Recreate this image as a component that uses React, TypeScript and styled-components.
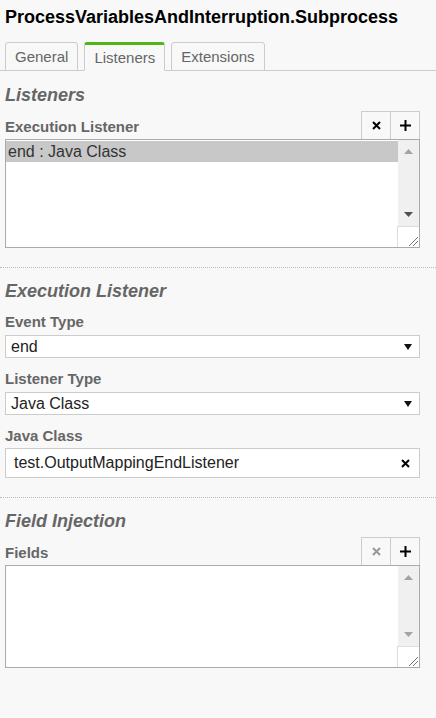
import React from 'react';
import styled, { createGlobalStyle } from 'styled-components';

const GlobalStyle = createGlobalStyle`
	html, body {
		margin: 0;
		padding: 0;
		background: #f8f8f8;
		font-family: 'Liberation Sans', Arial, sans-serif;
	}
	* {
		box-sizing: border-box;
	}
`;

const Panel = styled.div`
	min-height: 100vh;
	background: #f8f8f8;
`;

const Header = styled.div`
	padding: 7px 5px 0 5px;
`;

const Title = styled.div`
	font-size: 18px;
	line-height: 20px;
	font-weight: bold;
	color: #000;
	white-space: nowrap;
`;

const TabBar = styled.div`
	display: flex;
	gap: 6px;
	margin-top: 15px;
	margin-bottom: 1px;
	padding-left: 5px;
	border-bottom: 1px solid #ccc;
`;

const TabLink = styled.div<{ $active?: boolean }>`
	display: flex;
	align-items: center;
	height: 29px;
	margin-bottom: -1px;
	padding: 0 9px;
	font-size: 15px;
	color: #666;
	background: #f8f8f8;
	border: 1px solid #ccc;
	border-top: ${(p) => (p.$active ? '3px solid #52b415' : '1px solid #ccc')};
	border-bottom-color: ${(p) => (p.$active ? '#f8f8f8' : '#ccc')};
	border-radius: 3px 3px 0 0;
`;

const Group = styled.div<{ $last?: boolean }>`
	padding: 13px 16px ${(p) => (p.$last ? '0' : '19px')} 5px;
	border-bottom: ${(p) => (p.$last ? 'none' : '1px dotted #bbb')};
`;

const GroupHeading = styled.div`
	font-size: 18px;
	line-height: 20px;
	font-weight: bold;
	font-style: italic;
	color: #666;
	margin-bottom: 2px;
`;

const Label = styled.div`
	font-size: 15px;
	line-height: 18px;
	font-weight: bold;
	color: #666;
`;

const ListHeader = styled.div`
	display: flex;
	justify-content: space-between;
	align-items: flex-start;
	height: 28px;
	margin-top: 6px;

	${Label} {
		margin-top: 7px;
	}
`;

const ActionButtons = styled.div`
	display: flex;
`;

const ActionButton = styled.div<{ $disabled?: boolean }>`
	display: flex;
	align-items: center;
	justify-content: center;
	width: 30px;
	height: 28px;
	border: 1px solid #ccc;
	border-bottom: none;
	color: ${(p) => (p.$disabled ? '#999' : '#000')};

	& + & {
		margin-left: -1px;
	}
`;

const ListBox = styled.div<{ $height: number }>`
	display: flex;
	height: ${(p) => p.$height}px;
	border: 1px solid #aaa;
	background: #fff;
`;

const ListItems = styled.div`
	flex: 1;
	padding-top: 1px;
`;

const ListRow = styled.div<{ $selected?: boolean }>`
	height: 21px;
	line-height: 21px;
	padding-left: 2px;
	font-size: 16px;
	color: #333;
	background: ${(p) => (p.$selected ? '#c8c8c8' : 'transparent')};
`;

const Scrollbar = styled.div`
	display: flex;
	flex-direction: column;
	width: 21px;
	background: #f0f0f0;
`;

const ScrollArrow = styled.div`
	display: flex;
	align-items: center;
	justify-content: center;
	height: 23px;
`;

const ScrollTrack = styled.div`
	flex: 1;
`;

const ResizeCorner = styled.div`
	display: flex;
	align-items: flex-end;
	justify-content: flex-end;
	height: 21px;
	margin-left: -1px;
	background: #fff;
	border-top: 1px solid #ddd;
	border-left: 1px solid #ddd;
`;

const Field = styled.div`
	margin-top: 12px;
`;

const SelectBox = styled.div`
	display: flex;
	align-items: center;
	justify-content: space-between;
	height: 23px;
	margin-top: 4px;
	padding: 0 7px 0 5px;
	font-size: 16px;
	color: #222;
	background: #fff;
	border: 1px solid #ccc;
`;

const TextInput = styled.div`
	display: flex;
	align-items: center;
	justify-content: space-between;
	height: 30px;
	margin-top: 3px;
	padding: 0 9px 0 8px;
	font-size: 16px;
	color: #222;
	background: #fff;
	border: 1px solid #ccc;
`;

const Triangle = ({ up, color }: { up?: boolean; color: string }) => (
	<svg width="9" height="5" viewBox="0 0 9 5">
		<polygon points={up ? '0,5 9,5 4.5,0' : '0,0 9,0 4.5,5'} fill={color} />
	</svg>
);

const CloseIcon = ({ color = '#000' }: { color?: string }) => (
	<svg width="9" height="9" viewBox="0 0 9 9">
		<path d="M1 1 L8 8 M8 1 L1 8" stroke={color} strokeWidth="2" />
	</svg>
);

const PlusIcon = () => (
	<svg width="11" height="11" viewBox="0 0 11 11">
		<path d="M5.5 0 V11 M0 5.5 H11" stroke="#000" strokeWidth="2" />
	</svg>
);

const Grip = () => (
	<svg width="12" height="12" viewBox="0 0 12 12">
		<path d="M2 11 L11 2 M6 11 L11 6" stroke="#777" strokeWidth="1" />
	</svg>
);

interface ListProps {
	label: string;
	rows: string[];
	height: number;
	canRemove?: boolean;
	canScrollDown?: boolean;
}

const ListField = ({ label, rows, height, canRemove, canScrollDown }: ListProps) => (
	<>
		<ListHeader>
			<Label>{label}</Label>
			<ActionButtons>
				<ActionButton $disabled={!canRemove}>
					<CloseIcon color={canRemove ? '#000' : '#999'} />
				</ActionButton>
				<ActionButton>
					<PlusIcon />
				</ActionButton>
			</ActionButtons>
		</ListHeader>
		<ListBox $height={height}>
			<ListItems>
				{rows.map((row, i) => (
					<ListRow key={row} $selected={i === 0}>
						{row}
					</ListRow>
				))}
			</ListItems>
			<Scrollbar>
				<ScrollArrow>
					<Triangle up color="#a3a3a3" />
				</ScrollArrow>
				<ScrollTrack />
				<ScrollArrow>
					<Triangle color={canScrollDown ? '#505050' : '#a3a3a3'} />
				</ScrollArrow>
				<ResizeCorner>
					<Grip />
				</ResizeCorner>
			</Scrollbar>
		</ListBox>
	</>
);

const SelectField = ({ label, value }: { label: string; value: string }) => (
	<Field>
		<Label>{label}</Label>
		<SelectBox>
			<span>{value}</span>
			<svg width="8" height="6" viewBox="0 0 8 6">
				<polygon points="0,0 8,0 4,6" fill="#111" />
			</svg>
		</SelectBox>
	</Field>
);

export default function App() {
	return (
		<Panel>
			<GlobalStyle />
			<Header>
				<Title>ProcessVariablesAndInterruption.Subprocess</Title>
			</Header>
			<TabBar>
				<TabLink>General</TabLink>
				<TabLink $active>Listeners</TabLink>
				<TabLink>Extensions</TabLink>
			</TabBar>

			<Group>
				<GroupHeading>Listeners</GroupHeading>
				<ListField
					label="Execution Listener"
					rows={['end : Java Class']}
					height={109}
					canRemove
					canScrollDown
				/>
			</Group>

			<Group>
				<GroupHeading>Execution Listener</GroupHeading>
				<SelectField label="Event Type" value="end" />
				<SelectField label="Listener Type" value="Java Class" />
				<Field>
					<Label>Java Class</Label>
					<TextInput>
						<span>test.OutputMappingEndListener</span>
						<CloseIcon />
					</TextInput>
				</Field>
			</Group>

			<Group $last>
				<GroupHeading>Field Injection</GroupHeading>
				<ListField label="Fields" rows={[]} height={103} />
			</Group>
		</Panel>
	);
}
